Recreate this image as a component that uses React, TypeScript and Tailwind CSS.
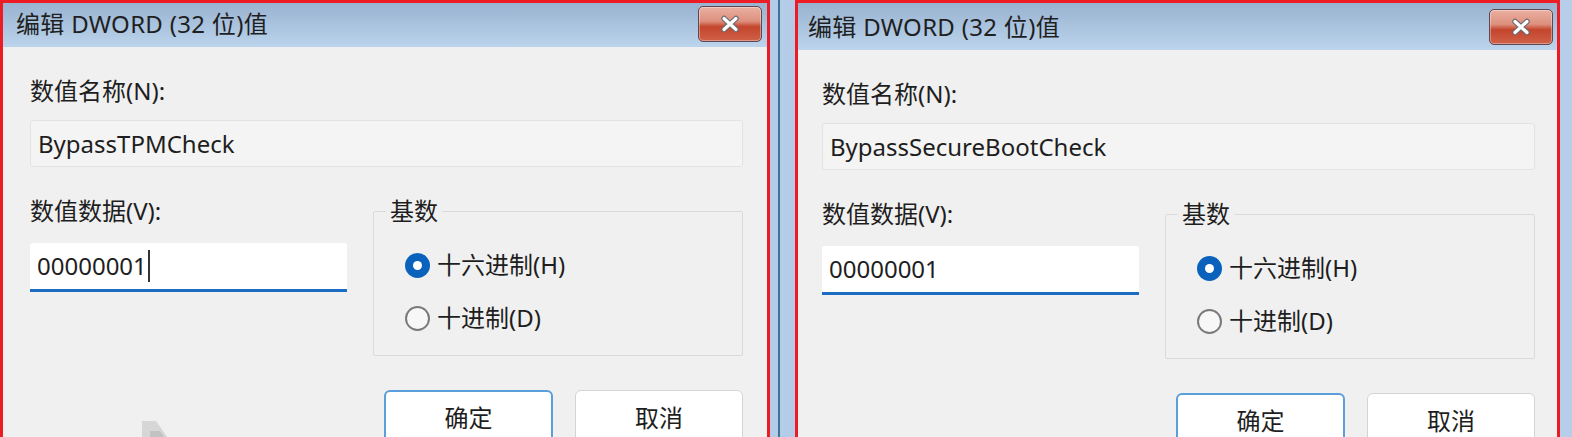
import React from "react";

type Side = "left" | "right";

const CloseButton = () => (
  <div className="flex h-[36px] w-[64px] items-center justify-center rounded-[5px] border border-[#5e4752] bg-[linear-gradient(to_bottom,#eab0a2_0%,#dd907d_42%,#c4452c_58%,#cf6148_100%)] shadow-[inset_0_0_0_1px_rgba(255,255,255,0.35)]">
    <svg width="26" height="18" viewBox="0 0 26 18">
      <path d="M7 3.5 L19 14.5 M19 3.5 L7 14.5" stroke="#6a6a72" strokeWidth="5.5" strokeLinecap="round" />
      <path d="M7 3.5 L19 14.5 M19 3.5 L7 14.5" stroke="#ffffff" strokeWidth="3.2" strokeLinecap="round" />
    </svg>
  </div>
);

const Radio = ({ checked, label }: { checked: boolean; label: string }) => (
  <div className="flex h-[30px] items-center gap-[7px]">
    {checked ? (
      <span className="flex h-[25px] w-[25px] items-center justify-center rounded-full bg-[#0a62bd]">
        <span className="h-[9px] w-[9px] rounded-full bg-white" />
      </span>
    ) : (
      <span className="h-[25px] w-[25px] rounded-full border-2 border-[#7a7a7a] bg-[#f7f7f7]" />
    )}
    <span>{label}</span>
  </div>
);

const Dialog = ({ side, name, cursor }: { side: Side; name: string; cursor?: boolean }) => {
  const left = side === "left";
  return (
    <div
      className={
        left
          ? "relative flex h-full w-[770px] shrink-0 flex-col border-[3px] border-b-0 border-[#ec1b24] bg-[#f0f0f0]"
          : "relative flex h-full w-[765px] shrink-0 flex-col border-[3px] border-b-0 border-[#ec1b24] bg-[#f0f0f0]"
      }
    >
      {/* title bar */}
      <div
        className={
          left
            ? "flex h-[44px] shrink-0 items-center justify-between bg-[linear-gradient(to_bottom,#98b2d0,#bcd4ec)] pl-[13px] pr-[5px] pb-[2px]"
            : "flex h-[47px] shrink-0 items-center justify-between bg-[linear-gradient(to_bottom,#98b2d0,#bcd4ec)] pl-[10px] pr-[4px]"
        }
      >
        <span className="text-[24px] tracking-[0.3px] text-[#1f1f1f]">编辑 DWORD (32 位)值</span>
        <CloseButton />
      </div>

      {/* body */}
      <div
        className={
          left
            ? "flex shrink-0 flex-col pl-[27px] pr-[24px] pt-[29px]"
            : "flex shrink-0 flex-col pl-[24px] pr-[22px] pt-[29px]"
        }
      >
        <div className="h-[30px]">数值名称(N):</div>
        <div className="mt-[14px] flex h-[47px] items-center rounded-[3px] border border-[#e2e2e2] bg-[#f4f4f4] px-[7px]">
          {name}
        </div>

        <div className="mt-[29px] flex gap-[26px]">
          <div className="flex w-[317px] shrink-0 flex-col">
            <div className="h-[30px]">数值数据(V):</div>
            <div className="mt-[17px] flex h-[49px] items-center rounded-t-[3px] border-b-[3px] border-[#1b6cc2] bg-white px-[7px]">
              <span>00000001</span>
              {cursor && <span className="ml-[1px] h-[32px] w-[2px] bg-[#333]" />}
            </div>
          </div>

          <fieldset className="flex-1 rounded-[2px] border border-[#dadada] pb-[22px]">
            <legend className="ml-[12px] px-[4px]">基数</legend>
            <div className="mt-[24px] flex flex-col gap-[23px] pl-[31px]">
              <Radio checked label="十六进制(H)" />
              <Radio checked={false} label="十进制(D)" />
            </div>
          </fieldset>
        </div>

        <div className="mt-[34px] flex justify-end gap-[22px]">
          <div className="flex h-[56px] w-[169px] items-center justify-center rounded-[6px] border-2 border-[#5a9edb] bg-white">
            确定
          </div>
          <div className="flex h-[56px] w-[168px] items-center justify-center rounded-[6px] border border-[#d4d4d4] bg-white">
            取消
          </div>
        </div>
      </div>

      {cursor && (
        <svg className="absolute left-[135px] top-[414px]" width="44" height="30" viewBox="0 0 44 30">
          <path d="M4 4 H18 L32 24 H12 V30 H4 Z" fill="#cfcfcf" opacity="0.8" />
          <path d="M12 14 H22 L30 26 H12 Z" fill="#b9b9b9" opacity="0.7" />
        </svg>
      )}
    </div>
  );
};

export default function App() {
  return (
    <div
      className="flex h-[437px] w-[1572px] overflow-hidden bg-[#b6cee9] text-[24px] leading-[30px] text-[#1e1e1e]"
      style={{ fontFamily: '"Noto Sans", "Noto Sans CJK SC", sans-serif' }}
    >
      <Dialog side="left" name="BypassTPMCheck" cursor />
      <div className="flex h-full w-[25px] shrink-0 bg-[#b4cce8] pl-[8px]">
        <div className="h-full w-[2px] bg-[#3a7594]" />
      </div>
      <Dialog side="right" name="BypassSecureBootCheck" />
    </div>
  );
}
